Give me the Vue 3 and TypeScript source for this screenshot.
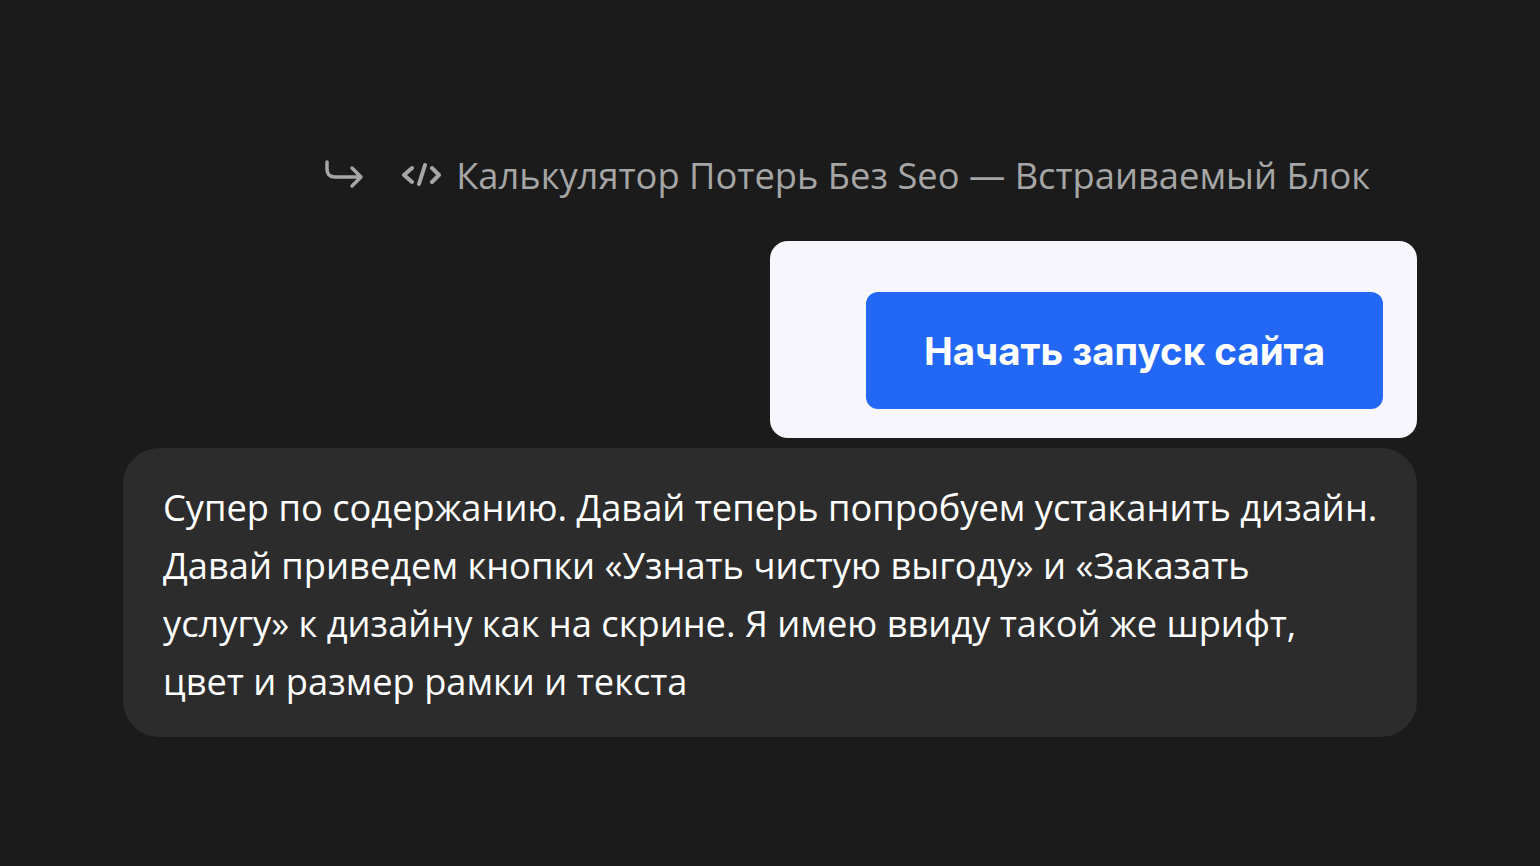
<template>
  <main class="chat">
    <div class="reply-ref">
      <svg class="reply-icon" width="40" height="32" viewBox="0 0 40 32" fill="none">
        <path d="M3 3v7c0 5.500 3 8 8 8h26M28 9l9 9-9 9" />
      </svg>
      <svg class="code-icon" width="40" height="24" viewBox="0 0 40 24" fill="none">
        <path d="M11 5l-8 7 8 7M31 5l7 7-7 7M24 2l-6 19" />
      </svg>
      <span class="reply-title">{{ title }}</span>
    </div>

    <div class="shot">
      <button class="shot-btn" type="button">{{ buttonLabel }}</button>
    </div>

    <div class="bubble">
      <p v-for="line in lines" :key="line">{{ line }}</p>
    </div>
  </main>
</template>

<script setup lang="ts">
const title = 'Калькулятор Потерь Без Seo — Встраиваемый Блок'
const buttonLabel = 'Начать запуск сайта'

const lines: string[] = [
  'Супер по содержанию. Давай теперь попробуем устаканить дизайн.',
  'Давай приведем кнопки «Узнать чистую выгоду» и «Заказать',
  'услугу» к дизайну как на скрине. Я имею ввиду такой же шрифт,',
  'цвет и размер рамки и текста',
]
</script>

<style scoped>
.chat {
  box-sizing: border-box;
  width: 100%;
  height: 866px;
  padding: 151px 123px 0;
  display: flex;
  flex-direction: column;
  align-items: flex-end;
  font-family: "Open Sans", "Noto Sans", sans-serif;
}

.reply-ref {
  height: 48px;
  padding-right: 47px;
  display: flex;
  align-items: center;
  color: #a6a6a6;
}

.reply-icon {
  margin-right: 37px;
  stroke: #a6a6a6;
  stroke-width: 3.5;
  stroke-linecap: round;
  stroke-linejoin: round;
}

.code-icon {
  margin-right: 15px;
  stroke: #a6a6a6;
  stroke-width: 4;
  stroke-linecap: round;
  stroke-linejoin: round;
}

.reply-title {
  font-size: 36.3px;
  line-height: 48px;
  white-space: nowrap;
}

.shot {
  box-sizing: border-box;
  width: 647px;
  height: 197px;
  margin-top: 42px;
  padding: 51px 34px 0 0;
  display: flex;
  justify-content: flex-end;
  align-items: flex-start;
  background: #f6f6fc;
  border-radius: 18px;
}

.shot-btn {
  width: 517px;
  height: 117px;
  border: none;
  border-radius: 12px;
  background: #2268f5;
  color: #fff;
  font-family: Inter, "Liberation Sans", sans-serif;
  font-size: 38.5px;
  font-weight: 700;
}

.bubble {
  box-sizing: border-box;
  width: 1294px;
  height: 289px;
  margin-top: 10px;
  padding: 30px 40px 0;
  background: #2c2c2c;
  border-radius: 36px;
  color: #fff;
}

.bubble p {
  margin: 0;
  font-size: 36.25px;
  line-height: 58px;
  white-space: nowrap;
}
</style>

<style>
html,
body {
  background: #1b1b1b;
}
</style>
